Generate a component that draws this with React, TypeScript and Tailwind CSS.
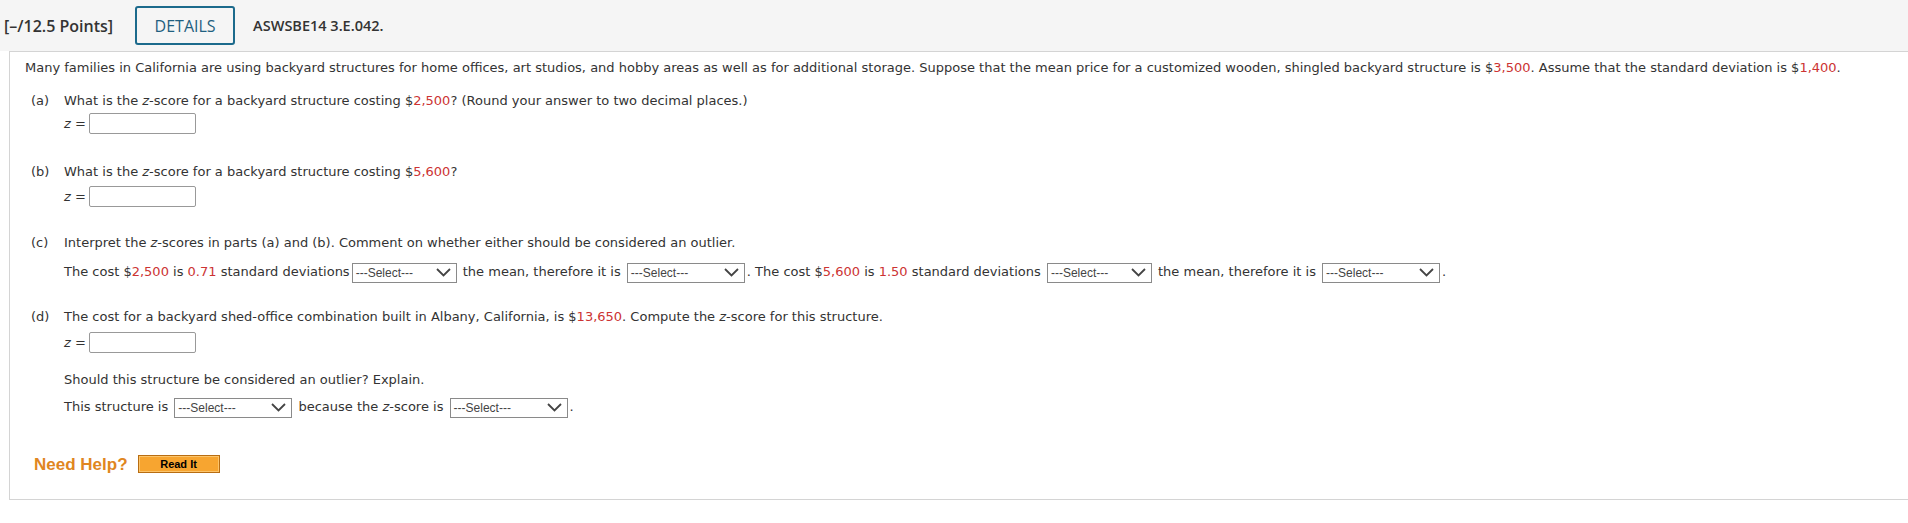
import React from "react";

const Red = ({ children }: { children: React.ReactNode }) => (
  <span className="text-[#cc3333]">{children}</span>
);

const Z = () => <i>z</i>;

const Select = ({ wide }: { wide?: boolean }) => (
  <span
    className={`mx-[2px] inline-flex h-[20px] items-center justify-between border border-[#8a8a8a] bg-white pl-[3px] pr-[5px] align-middle font-['Liberation_Sans',sans-serif] text-[12px] leading-none text-[#444] ${
      wide ? "w-[118px]" : "w-[105px]"
    }`}
  >
    ---Select---
    <svg width="15" height="9" viewBox="0 0 15 9" fill="none">
      <path d="M1 1l6.5 6.5L14 1" stroke="#444" strokeWidth="1.8" />
    </svg>
  </span>
);

const Answer = () => (
  <div className="flex items-center pl-[39px]">
    <span className="mr-[3px]">
      <Z /> =
    </span>
    <span className="h-[21px] w-[107px] rounded-[2px] border border-[#999] bg-white" />
  </div>
);

const Part = ({ label, children }: { label: string; children: React.ReactNode }) => (
  <div className="flex leading-[18px]">
    <span className="w-[39px] shrink-0 pl-[6px]">{label}</span>
    <span>{children}</span>
  </div>
);

export default function App() {
  return (
    <div className="min-h-[523px] bg-white text-[#333]">
      <div className="flex h-[51px] items-center bg-[#f5f5f5] pl-[4px] font-['Open_Sans',sans-serif]">
        <span className="text-[16px] font-semibold">[–/12.5 Points]</span>
        <span className="ml-[22px] flex h-[39px] w-[100px] items-center justify-center rounded-[3px] border-2 border-[#1c6a8c] text-[16px] text-[#1f5f80]">
          DETAILS
        </span>
        <span className="ml-[18px] text-[14.5px] font-semibold">ASWSBE14 3.E.042.</span>
      </div>

      <div className="ml-[9px] border-y border-l border-[#d4d4d4] pb-[26px] pl-[15px] pt-[7px] font-['DejaVu_Sans',sans-serif] text-[13px]">
        <p className="leading-[18px]">
          Many families in California are using backyard structures for home offices, art studios, and hobby
          areas as well as for additional storage. Suppose that the mean price for a customized wooden, shingled
          backyard structure is $<Red>3,500</Red>. Assume that the standard deviation is $<Red>1,400</Red>.
        </p>

        <div className="mt-[15px]">
          <Part label="(a)">
            What is the <Z />-score for a backyard structure costing $<Red>2,500</Red>? (Round your answer to two
            decimal places.)
          </Part>
        </div>
        <div className="mt-[3px]">
          <Answer />
        </div>

        <div className="mt-[29px]">
          <Part label="(b)">
            What is the <Z />-score for a backyard structure costing $<Red>5,600</Red>?
          </Part>
        </div>
        <div className="mt-[5px]">
          <Answer />
        </div>

        <div className="mt-[27px]">
          <Part label="(c)">
            Interpret the <Z />-scores in parts (a) and (b). Comment on whether either should be considered an
            outlier.
          </Part>
        </div>
        <div className="mt-[9px] pl-[39px] leading-[22px]">
          The cost $<Red>2,500</Red> is <Red>0.71</Red> standard deviations
          <Select /> the mean, therefore it is <Select wide />. The cost $<Red>5,600</Red> is <Red>1.50</Red>{" "}
          standard deviations <Select /> the mean, therefore it is <Select wide />.
        </div>

        <div className="mt-[25px]">
          <Part label="(d)">
            The cost for a backyard shed-office combination built in Albany, California, is $<Red>13,650</Red>.
            Compute the <Z />-score for this structure.
          </Part>
        </div>
        <div className="mt-[6px]">
          <Answer />
        </div>
        <p className="mt-[18px] pl-[39px] leading-[18px]">Should this structure be considered an outlier? Explain.</p>
        <div className="mt-[7px] pl-[39px] leading-[22px]">
          This structure is <Select wide /> because the <Z />-score is <Select wide />.
        </div>

        <div className="mt-[37px] flex items-center pl-[9px] font-['Liberation_Sans',sans-serif] leading-none">
          <span className="text-[17px] font-bold text-[#e0861f]">Need Help?</span>
          <span className="ml-[10px] flex h-[18px] w-[82px] items-center justify-center border border-[#b86d12] bg-[#f7a530] text-[11px] font-bold text-black shadow-[inset_0_0_0_1px_#fcc46a]">
            Read It
          </span>
        </div>
      </div>
    </div>
  );
}
